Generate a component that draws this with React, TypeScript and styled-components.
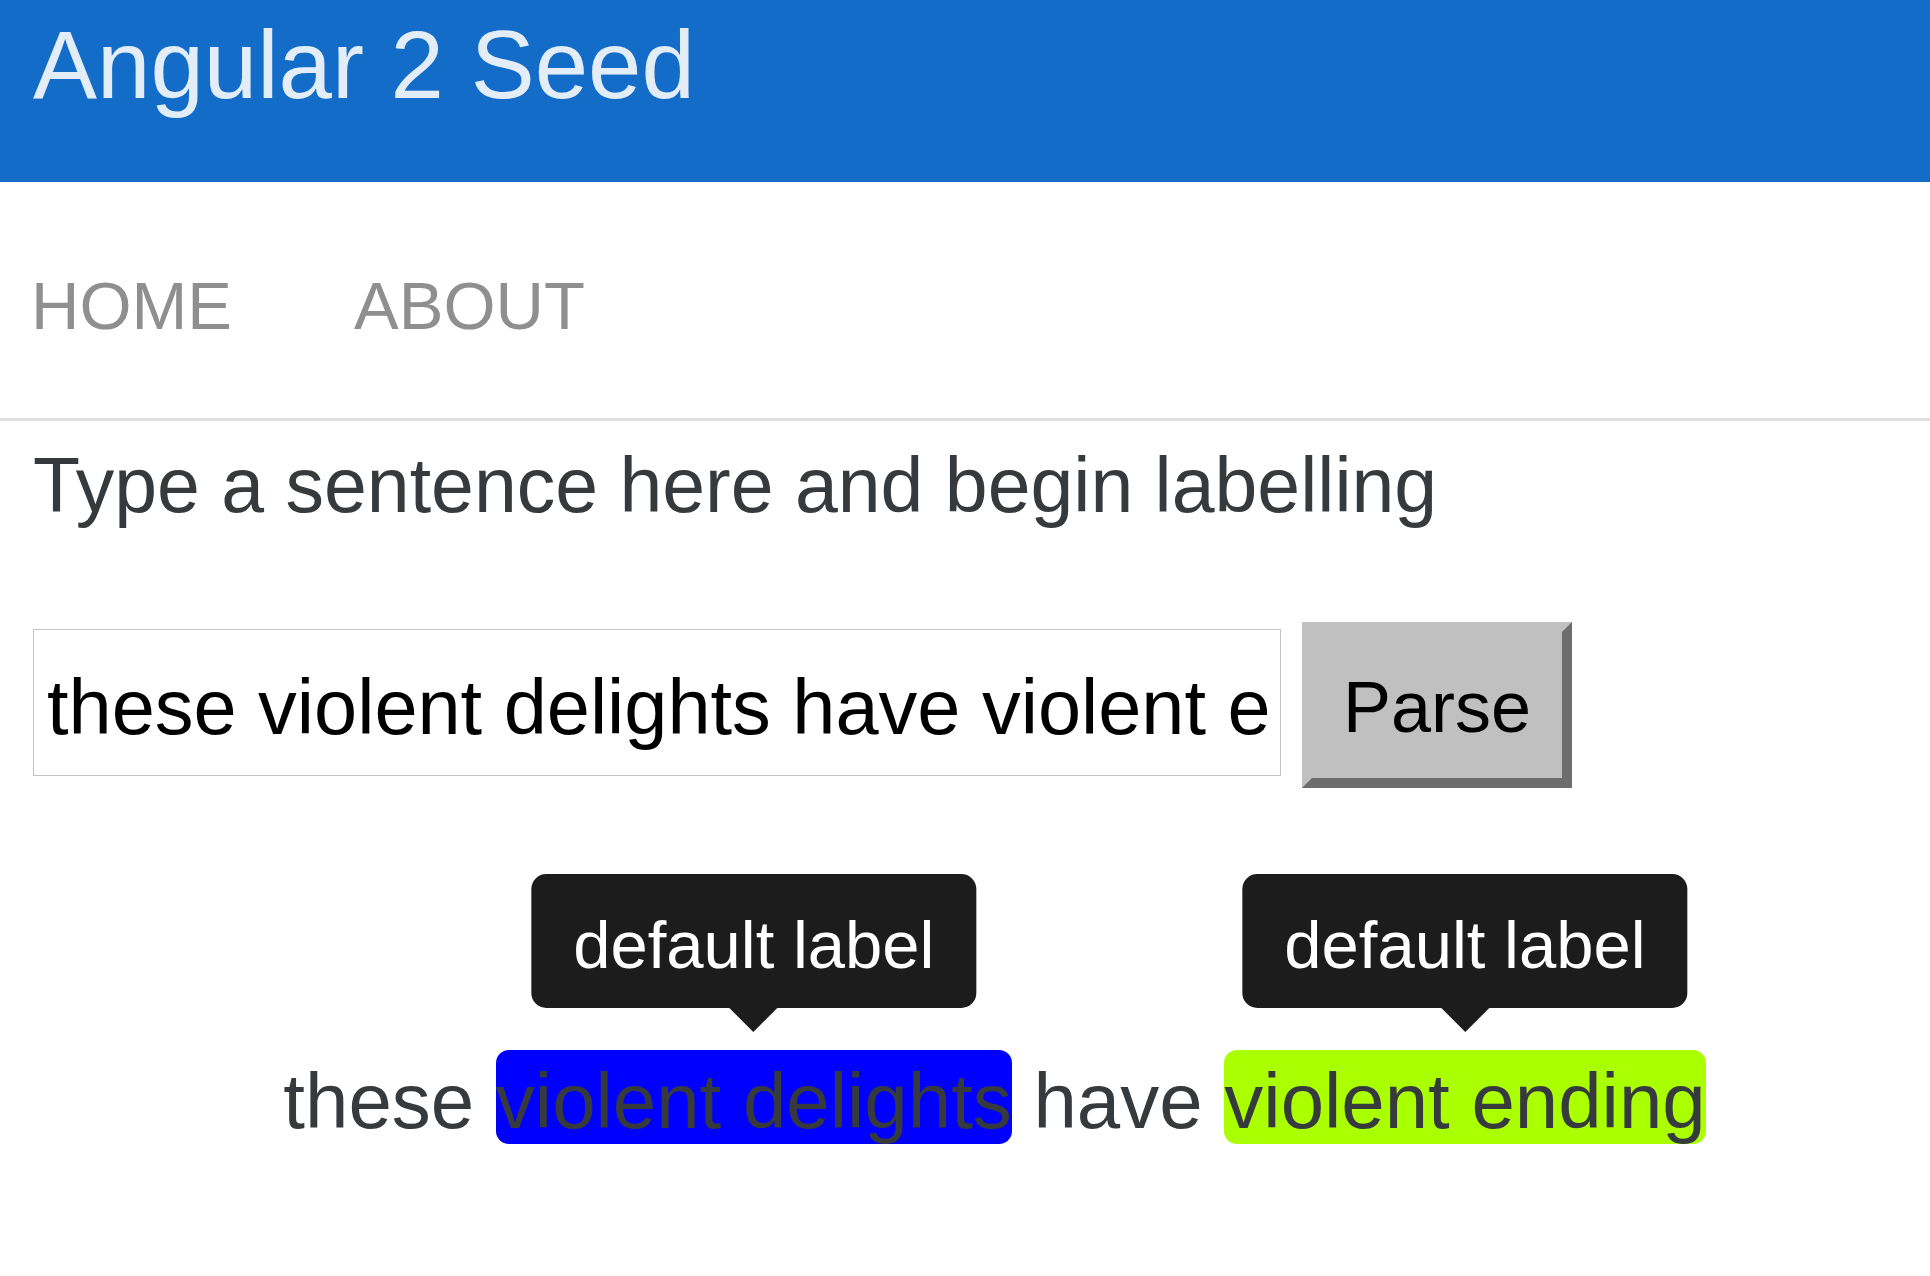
import React, {useState} from 'react';
import styled, {createGlobalStyle} from 'styled-components';

const GlobalStyle = createGlobalStyle`
  body {
    margin: 0;
    background: #fff;
    font-family: 'Liberation Sans', Arial, Helvetica, sans-serif;
  }
`;

const Header = styled.header`
  height: 182px;
  box-sizing: border-box;
  padding: 17px 33px 0;
  background-color: #136cc8;
`;

const Title = styled.h1`
  margin: 0;
  font-size: 96px;
  font-weight: 400;
  line-height: 96px;
  color: #e3edf8;
`;

const Nav = styled.nav`
  display: flex;
  gap: 122px;
  height: 239px;
  box-sizing: border-box;
  padding: 90px 31px 0;
  border-bottom: 3px solid #e0e0e0;
`;

const NavLink = styled.a`
  font-size: 67px;
  line-height: 67px;
  color: #8f8f8f;
  text-decoration: none;
  text-transform: uppercase;
`;

const Main = styled.main`
  padding: 0 33px;
`;

const Prompt = styled.p`
  margin: 26px 0 0;
  font-size: 77px;
  line-height: 77px;
  color: #373a3c;
`;

const FormRow = styled.div`
  display: flex;
  align-items: flex-start;
  gap: 21px;
  margin-top: 98px;
`;

const SentenceInput = styled.input`
  width: 1248px;
  height: 147px;
  margin-top: 7px;
  box-sizing: border-box;
  border: 1px solid #c4c4c4;
  padding: 10px 13px 0;
  font-family: inherit;
  font-size: 77.5px;
  color: #000;
  outline: none;
`;

const ParseButton = styled.button`
  width: 270px;
  height: 166px;
  box-sizing: border-box;
  border: 10px solid;
  border-color: #c0c0c0 #6d6d6d #6d6d6d #c0c0c0;
  background-color: #c0c0c0;
  padding: 4px 0 0;
  font-family: inherit;
  font-size: 72px;
  color: #000;
`;

const Sentence = styled.div`
  margin-top: 262px;
  padding-left: 59px;
  text-align: center;
  white-space: nowrap;
  font-size: 78px;
  line-height: 86px;
  color: #373a3c;
`;

const Label = styled.span<{$color: string}>`
  position: relative;
  display: inline-block;
  padding-top: 8px;
  line-height: 86px;
  border-radius: 13px;
  background-color: ${p => p.$color};
`;

const Tooltip = styled.span`
  position: absolute;
  bottom: calc(100% + 42px);
  left: 50%;
  transform: translateX(-50%);
  padding: 37px 42px 30px;
  border-radius: 15px;
  background-color: #1c1c1c;
  color: #fff;
  font-size: 67px;
  line-height: 67px;
  white-space: nowrap;

  &::after {
    content: '';
    position: absolute;
    top: 100%;
    left: 50%;
    margin-left: -24px;
    border-top: 24px solid #1c1c1c;
    border-left: 24px solid transparent;
    border-right: 24px solid transparent;
  }
`;

type Chunk = {text: string; label?: string; color?: string};

const chunks: Chunk[] = [
  {text: 'these'},
  {text: 'violent delights', label: 'default label', color: '#0000ff'},
  {text: 'have'},
  {text: 'violent ending', label: 'default label', color: '#aaff00'},
];

const App: React.FC = () => {
  const [sentence, setSentence] = useState('these violent delights have violent ending');

  return (
    <>
      <GlobalStyle />
      <Header>
        <Title>Angular 2 Seed</Title>
      </Header>
      <Nav>
        <NavLink href="#">Home</NavLink>
        <NavLink href="#">About</NavLink>
      </Nav>
      <Main>
        <Prompt>Type a sentence here and begin labelling</Prompt>
        <FormRow>
          <SentenceInput value={sentence} onChange={e => setSentence(e.target.value)} />
          <ParseButton>Parse</ParseButton>
        </FormRow>
        <Sentence>
          {chunks.map((c, i) => (
            <React.Fragment key={i}>
              {i > 0 && ' '}
              {c.label ? (
                <Label $color={c.color!}>
                  <Tooltip>{c.label}</Tooltip>
                  {c.text}
                </Label>
              ) : (
                c.text
              )}
            </React.Fragment>
          ))}
        </Sentence>
      </Main>
    </>
  );
};

export default App;
